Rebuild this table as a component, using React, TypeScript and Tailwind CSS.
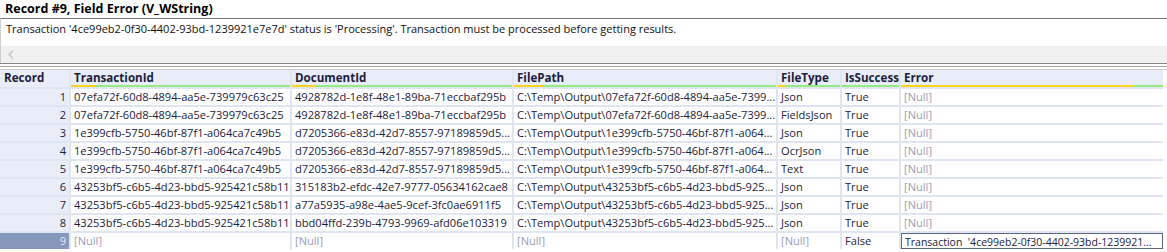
import React from "react";

const FONT = { fontFamily: '"Open Sans", "Noto Sans", sans-serif' };

const columns = [
  { name: "TransactionId", width: 219, nullPct: 0.11 },
  { name: "DocumentId", width: 220, nullPct: 0.11 },
  { name: "FilePath", width: 262, nullPct: 0.11 },
  { name: "FileType", width: 62, nullPct: 0.11 },
  { name: "IsSuccess", width: 57, nullPct: 0 },
  { name: "Error", width: 262, nullPct: 0.89 },
];

const NULL = "[Null]";
const MSG =
  "Transaction '4ce99eb2-0f30-4402-93bd-1239921e7e7d' status is 'Processing'. Transaction must be processed before getting results.";

const t1 = "07efa72f-60d8-4894-aa5e-739979c63c25";
const t2 = "1e399cfb-5750-46bf-87f1-a064ca7c49b5";
const t3 = "43253bf5-c6b5-4d23-bbd5-925421c58b11";
const p1 = "C:\\Temp\\Output\\07efa72f-60d8-4894-aa5e-7399...";
const p2 = "C:\\Temp\\Output\\1e399cfb-5750-46bf-87f1-a064...";
const p3 = "C:\\Temp\\Output\\43253bf5-c6b5-4d23-bbd5-925...";

const rows: string[][] = [
  [t1, "4928782d-1e8f-48e1-89ba-71eccbaf295b", p1, "Json", "True", NULL],
  [t1, "4928782d-1e8f-48e1-89ba-71eccbaf295b", p1, "FieldsJson", "True", NULL],
  [t2, "d7205366-e83d-42d7-8557-97189859d5...", p2, "Json", "True", NULL],
  [t2, "d7205366-e83d-42d7-8557-97189859d5...", p2, "OcrJson", "True", NULL],
  [t2, "d7205366-e83d-42d7-8557-97189859d5...", p2, "Text", "True", NULL],
  [t3, "315183b2-efdc-42e7-9777-05634162cae8", p3, "Json", "True", NULL],
  [t3, "a77a5935-a98e-4ae5-9cef-3fc0ae6911f5", p3, "Json", "True", NULL],
  [t3, "bbd04ffd-239b-4793-9969-afd06e103319", p3, "Json", "True", NULL],
  [NULL, NULL, NULL, NULL, "False", "Transaction  '4ce99eb2-0f30-4402-93bd-1239921..."],
];

function HeaderCell({ name, width, nullPct }: { name: string; width: number; nullPct: number }) {
  const yellow = Math.round(width * nullPct);
  return (
    <div className="flex h-[17px] flex-col bg-[#e8edf8]" style={{ width }}>
      <div className="flex-1 overflow-hidden whitespace-nowrap pl-[3px] text-[11.6px] font-bold leading-[15px] text-[#1c1c3c]">
        {name}
      </div>
      <div className="flex h-[2px]">
        <div className="h-full bg-[#ffd41c]" style={{ width: yellow }} />
        <div className="h-full flex-1 bg-[#94ec7e]" />
      </div>
    </div>
  );
}

export default function App() {
  return (
    <div className="h-[252px] w-[1167px] overflow-hidden bg-white" style={FONT}>
      {/* record detail */}
      <div className="h-[18px] pl-[5px] text-[12.5px] font-bold leading-[18px] text-black">
        Record #9, Field Error (V_WString)
      </div>
      <div className="h-[45px] border-t border-l border-[#7a7a7a] border-l-[#d0d0d0]">
        <div className="h-[19px] whitespace-nowrap pl-[5px] text-[11px] leading-[19px] text-[#111]">{MSG}</div>
        <div className="mt-[8px] flex h-[17px] items-center bg-[#f0f0f0] pl-[7px]">
          <svg width="6" height="9" viewBox="0 0 6 9">
            <path d="M5 0.5 L1 4.5 L5 8.5" fill="none" stroke="#c2c2c2" strokeWidth="1.3" />
          </svg>
        </div>
      </div>
      <div className="h-[1px] bg-[#858585]" />
      <div className="h-[2px]" />
      <div className="h-[1px] bg-[#a8a8a8]" />
      <div className="h-[2px]" />
      <div className="h-[1px] bg-[#c8c8c8]" />

      {/* grid */}
      <div className="flex w-[1163px] flex-col gap-[2px] bg-[#dfe6f2]">
        <div className="flex gap-[2px]">
          <div className="h-[17px] w-[69px] bg-[#e8edf8] pl-[4px] text-[11.6px] font-bold leading-[15px] text-[#1c1c3c]">
            Record
          </div>
          {columns.map((c) => (
            <HeaderCell key={c.name} {...c} />
          ))}
        </div>
        {rows.map((r, i) => {
          const selected = i === rows.length - 1;
          return (
            <div key={i} className="flex gap-[2px]">
              <div
                className={`h-[16px] w-[69px] pr-[3px] text-right text-[11.1px] leading-[16px] ${
                  selected ? "bg-[#8597ba] text-[#e6eaf4]" : "bg-[#e8edf8] text-[#1c1c3c]"
                }`}
              >
                {i + 1}
              </div>
              {r.map((v, j) => {
                const focused = selected && j === 5;
                return (
                  <div
                    key={j}
                    className={`h-[16px] overflow-hidden whitespace-pre pl-[3px] leading-[16px] ${
                      v === NULL ? "text-[#9c9cb4]" : "text-[#1c1c3c]"
                    } ${
                      focused
                        ? "border border-[#5c667c] bg-white pl-[2px] text-[10.5px] leading-[14px]"
                        : "bg-white text-[11.1px]"
                    }`}
                    style={{ width: columns[j].width }}
                  >
                    {v}
                  </div>
                );
              })}
            </div>
          );
        })}
      </div>
    </div>
  );
}
